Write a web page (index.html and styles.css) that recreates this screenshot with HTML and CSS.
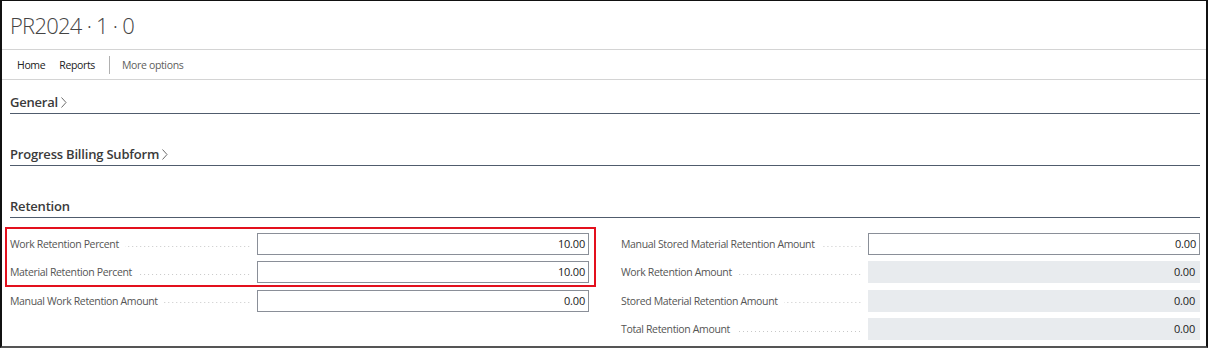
FILE: index.html
```html
<!DOCTYPE html>
<html lang="en">
<head>
<meta charset="utf-8">
<title>PR2024 · 1 · 0</title>
<link rel="stylesheet" href="styles.css">
</head>
<body>
<div class="frame">
  <header class="title-bar">
    <h1 class="title">PR2024 · 1 · 0</h1>
  </header>
  <nav class="actions">
    <span class="action">Home</span>
    <span class="action">Reports</span>
    <span class="divider"></span>
    <span class="action action-muted">More options</span>
  </nav>
  <main class="content">
    <section class="fasttab">
      <h2 class="fasttab-head">General<svg class="chev" width="6" height="11" viewBox="0 0 6 11"><polyline points="0.5,0.5 5,5.5 0.5,10.5" fill="none" stroke="#6b6b6b" stroke-width="1"/></svg></h2>
    </section>
    <section class="fasttab">
      <h2 class="fasttab-head">Progress Billing Subform<svg class="chev" width="6" height="11" viewBox="0 0 6 11"><polyline points="0.5,0.5 5,5.5 0.5,10.5" fill="none" stroke="#6b6b6b" stroke-width="1"/></svg></h2>
    </section>
    <section class="fasttab">
      <h2 class="fasttab-head">Retention</h2>
      <div class="fields">
        <div class="col">
          <div class="highlight"></div>
          <div class="row"><span class="label">Work Retention Percent</span><span class="leader"></span><span class="input">10.00</span></div>
          <div class="row"><span class="label">Material Retention Percent</span><span class="leader"></span><span class="input">10.00</span></div>
          <div class="row"><span class="label">Manual Work Retention Amount</span><span class="leader"></span><span class="input">0.00</span></div>
        </div>
        <div class="col">
          <div class="row"><span class="label">Manual Stored Material Retention Amount</span><span class="leader"></span><span class="input">0.00</span></div>
          <div class="row"><span class="label">Work Retention Amount</span><span class="leader"></span><span class="input readonly">0.00</span></div>
          <div class="row"><span class="label">Stored Material Retention Amount</span><span class="leader"></span><span class="input readonly">0.00</span></div>
          <div class="row"><span class="label">Total Retention Amount</span><span class="leader"></span><span class="input readonly">0.00</span></div>
        </div>
      </div>
    </section>
  </main>
</div>
</body>
</html>
```
FILE: styles.css
```css
* { box-sizing: border-box; }
html, body { margin: 0; padding: 0; background: #fff; }
body {
  font-family: "Open Sans", "Noto Sans", sans-serif;
  color: #212121;
  width: 1208px;
  height: 348px;
  overflow: hidden;
}
.frame {
  width: 1208px;
  height: 348px;
  border-top: 1px solid #111;
  border-left: 2px solid #111;
  border-right: 2px solid #111;
  border-bottom: 2px solid #555;
  overflow: hidden;
}
.title-bar {
  height: 49px;
  padding-left: 8px;
  display: flex;
  align-items: center;
  border-bottom: 1px solid #d4d4d4;
}
.title {
  margin: 0;
  font-size: 22px;
  font-weight: 300;
  color: #444;
  letter-spacing: -0.75px;
}
.actions {
  height: 30px;
  display: flex;
  align-items: center;
  padding-left: 15px;
  border-bottom: 1px solid #d4d4d4;
  font-size: 10.5px;
  letter-spacing: -0.35px;
  color: #212121;
}
.action { margin-right: 14px; }
.action-muted { color: #605e5c; }
.divider {
  width: 1px;
  height: 18px;
  background: #b0b0b0;
  margin: 0 12px 0 0;
}
.content { padding: 0 6px 0 8px; }
.fasttab-head {
  margin: 0;
  height: 34px;
  display: flex;
  align-items: flex-end;
  padding-bottom: 1px;
  border-bottom: 1px solid #505c6d;
  font-size: 13px;
  line-height: 19px;
  font-weight: 600;
  letter-spacing: -0.2px;
  color: #3a3a3a;
}
.fasttab { margin-bottom: 18px; }
.chev {
  margin-left: 3px;
  margin-bottom: 4px;
}
.fields {
  display: grid;
  grid-template-columns: 579px 579px;
  column-gap: 32px;
  margin-top: 15px;
}
.col { position: relative; }
.highlight {
  position: absolute;
  left: -5px;
  top: -6px;
  width: 591px;
  height: 60px;
  border: 2px solid #e3101d;
  pointer-events: none;
}
.row {
  display: flex;
  align-items: center;
  height: 22px;
  margin-bottom: 6.4px;
  font-size: 10.5px;
  letter-spacing: -0.35px;
}
.label { color: #555; white-space: nowrap; padding-right: 6px; }
.leader {
  flex: 1;
  height: 1px;
  margin-top: 4px;
  margin-right: 5px;
  background-image: linear-gradient(to right, #c8c8c8 1px, transparent 1px);
  background-size: 4px 1px;
  background-repeat: repeat-x;
  background-position: right;
}
.input {
  flex: 0 0 332px;
  height: 22px;
  border: 1px solid #8a8f98;
  background: #fff;
  text-align: right;
  padding-right: 3px;
  line-height: 20px;
  font-size: 11px;
  color: #212121;
  letter-spacing: -0.2px;
}
.input.readonly {
  border-color: #e8ebee;
  background: #e8ebee;
  padding-right: 4px;
}
```
